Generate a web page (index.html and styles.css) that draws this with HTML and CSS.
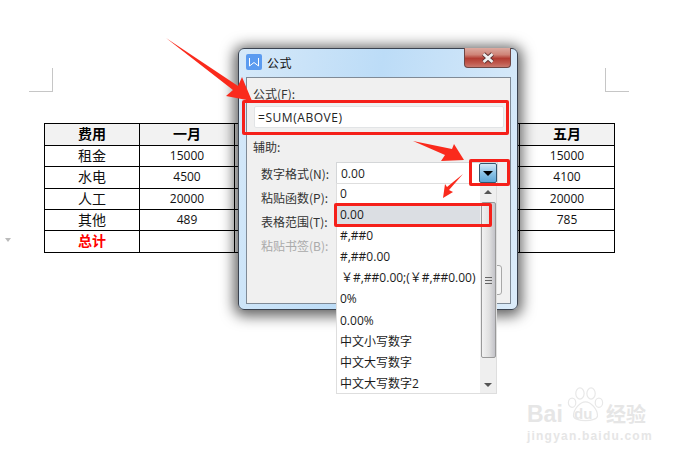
FILE: index.html
```html
<!DOCTYPE html>
<html lang="zh">
<head>
<meta charset="utf-8">
<title>公式</title>
<link rel="stylesheet" href="styles.css">
</head>
<body>
<main class="doc">
  <div class="marks"><span class="mark mark-l"></span><span class="mark mark-r"></span></div>
  <table class="sheet">
    <tr class="head"><th>费用</th><th>一月</th><th></th><th></th><th></th><th>五月</th></tr>
    <tr><td class="cn">租金</td><td>15000</td><td></td><td></td><td></td><td>15000</td></tr>
    <tr><td class="cn">水电</td><td>4500</td><td></td><td></td><td></td><td>4100</td></tr>
    <tr><td class="cn">人工</td><td>20000</td><td></td><td></td><td></td><td>20000</td></tr>
    <tr><td class="cn">其他</td><td>489</td><td></td><td></td><td></td><td>785</td></tr>
    <tr><td class="total">总计</td><td></td><td></td><td></td><td></td><td></td></tr>
  </table>
  <span class="para-mark"></span>

  <section class="dialog">
    <header class="titlebar">
      <span class="logo"><svg viewBox="0 0 16 16" width="16" height="16"><path d="M3.5 4 V12 L8 8.5 L12.5 12 V4" fill="none" stroke="#fff" stroke-width="1"/></svg></span>
      <span class="title">公式</span>
      <span class="close"><svg viewBox="0 0 14 12" width="14" height="12"><path d="M2.5 2 L11.5 10 M11.5 2 L2.5 10" stroke="#5a3030" stroke-width="4.4"/><path d="M2.5 2 L11.5 10 M11.5 2 L2.5 10" stroke="#f0f0f0" stroke-width="2.8"/></svg></span>
    </header>
    <div class="panel">
      <div class="label">公式(F):</div>
      <div class="input">=SUM(ABOVE)</div>
      <div class="label label-help">辅助:</div>
      <div class="field field-first">数字格式(N):</div>
      <div class="field">粘贴函数(P):</div>
      <div class="field">表格范围(T):</div>
      <div class="field field-off">粘贴书签(B):</div>
      <div class="ok"></div>
    </div>
  </section>

  <div class="combo">
    <span class="combo-value">0.00</span>
    <span class="combo-btn"><i></i></span>
  </div>
  <div class="list">
    <ul class="options">
      <li>0</li>
      <li class="on">0.00</li>
      <li>#,##0</li>
      <li>#,##0.00</li>
      <li class="wide">￥#,##0.00;(￥#,##0.00)</li>
      <li>0%</li>
      <li>0.00%</li>
      <li>中文小写数字</li>
      <li>中文大写数字</li>
      <li>中文大写数字2</li>
    </ul>
    <div class="scroll">
      <i class="up"></i>
      <div class="thumb"><b></b></div>
      <i class="down"></i>
    </div>
  </div>

  <span class="box box-a"></span>
  <span class="box box-b"></span>
  <span class="box box-c"></span>

  <svg class="arrows" viewBox="0 0 687 460" width="687" height="460">
    <polygon points="166,38 238,86 242,77 252,101 226,96 233,90" fill="#fa2a1c"/>
    <polygon points="413,141 452,149 454,144 464,160 441,161 445,155" fill="#fa2a1c"/>
    <polygon points="463,174 449,190 453,192 443,198 445,184 447,187" fill="#fa2a1c"/>
  </svg>

  <div class="wm">
    <svg class="paw" viewBox="0 0 40 40" width="37" height="37"><g fill="none" stroke="#e8e8e8" stroke-width="1.3"><ellipse cx="5.5" cy="17" rx="4" ry="5"/><ellipse cx="14" cy="7" rx="4.5" ry="6"/><ellipse cx="26" cy="7" rx="4.5" ry="6"/><ellipse cx="34.5" cy="17" rx="4" ry="5"/><path d="M7 31 C7 24 14 16 20 16 C26 16 33 24 33 31 C33 38 7 38 7 31Z"/></g></svg>
    <div class="wm-main"><span class="wm-bai">Bai</span><span class="wm-du">du</span><span class="wm-cn">经验</span></div>
    <div class="wm-sub">jingyan.baidu.com</div>
  </div>
</main>
</body>
</html>
```
FILE: styles.css
```css
* { box-sizing: border-box; }
html, body { margin: 0; padding: 0; background: #fff; }
body { width: 687px; height: 460px; overflow: hidden; font-family: "Noto Sans", "Noto Sans CJK SC", sans-serif; }
.doc { position: relative; width: 687px; height: 460px; padding: 68px 0 0 29px; }

.marks { display: flex; justify-content: space-between; width: 600px; height: 24px; }
.mark { display: block; width: 24px; height: 24px; border-bottom: 1px solid #c6c6c6; }
.mark-l { border-right: 1px solid #c6c6c6; }
.mark-r { border-left: 1px solid #c6c6c6; }

.sheet { border-collapse: collapse; table-layout: fixed; width: 570px; margin: 31px 0 0 15px; color: #111; }
.sheet th, .sheet td { width: 95px; border: 1px solid #000; padding: 0; text-align: center; height: 21.3px; line-height: 18px; font-size: 12px; font-family: "Open Sans", "Noto Sans CJK SC", sans-serif; }
.sheet .head th { background: #f2f2f2; font: bold 14px/18px "Noto Sans CJK SC", sans-serif; color: #000; padding-bottom: 3px; }
.sheet td.cn { font: 14px/18px "Noto Sans CJK SC", sans-serif; padding-bottom: 2px; }
.sheet td.total { font: bold 14px/18px "Noto Sans CJK SC", sans-serif; color: #f00; padding-bottom: 3px; }
.para-mark { position: absolute; left: 5px; top: 238px; border: 3px solid transparent; border-top: 4px solid #bbb; border-bottom: 0; width: 0; height: 0; }

.dialog { position: absolute; left: 238px; top: 48px; width: 280px; height: 262px; padding: 0 6px 5px 7px; display: flex; flex-direction: column; border: 1px solid #3b4350; border-radius: 6px; background: linear-gradient(100deg, #d6e9f9 0%, #bcdcf7 45%, #dcecfa 100%); box-shadow: 0 2px 14px 4px rgba(0,0,0,.62); font-size: 12px; color: #222; }
.titlebar { position: relative; display: flex; align-items: center; gap: 5px; height: 28px; flex: none; padding-bottom: 2px; }
.logo { width: 16px; height: 16px; background: #5b9bf0; border-radius: 2px; display: flex; }
.title { font: 12px "Noto Sans CJK SC", sans-serif; color: #111; letter-spacing: .4px; }
.close { position: absolute; right: 0; top: -1px; width: 47px; height: 20px; display: flex; align-items: center; justify-content: center; border: 1px solid #6e4644; border-top: 0; border-radius: 0 0 4px 4px; background: linear-gradient(#dcaaa0, #cf8478 35%, #b23c32 55%, #c0594e 80%, #c9786e); }
.panel { position: relative; flex: 1; border: 1px solid #7f8a96; background: #f0f0f0; padding: 8px 7px 0; font-family: "Noto Sans CJK SC", sans-serif; }
.label { height: 18px; line-height: 16px; color: #333; margin-left: -1px; }
.input { width: 250px; height: 22px; margin-top: 2px; padding-left: 3px; line-height: 21px; background: #fff; border: 1px solid #e2e4e6; border-radius: 2px; font-family: "Open Sans", sans-serif; font-size: 12px; letter-spacing: .55px; color: #222; }
.label-help { margin-top: 11px; }
.field { width: 82px; height: 24px; line-height: 22px; padding-left: 7px; color: #333; white-space: nowrap; }
.field-first { margin-top: 6px; }
.field-off { color: #aaa; }
.ok { position: absolute; right: 8px; top: 187px; width: 18px; height: 30px; border: 1px solid #a8a8a8; border-radius: 3px; background: #f5f5f5; }

.combo { position: absolute; left: 336px; top: 162px; width: 162px; height: 22px; display: flex; align-items: center; justify-content: space-between; background: #fff; border: 1px solid #d4d6d8; padding: 0 0 0 4px; font-family: "Open Sans", sans-serif; font-size: 12px; color: #222; }
.combo-btn { width: 18px; height: 20px; display: flex; align-items: center; justify-content: center; background: linear-gradient(#d4e9f7, #8cc4e6 50%, #5fa7d6); border: 1px solid #33566e; border-radius: 2px; }
.combo-btn i { width: 0; height: 0; border: 5px solid transparent; border-top: 5px solid #000; border-bottom: 0; }

.list { position: absolute; left: 336px; top: 183px; width: 161px; height: 211px; display: flex; background: #fff; border: 1px solid #dedede; font-size: 12px; color: #1c1c1c; font-family: "Open Sans", "Noto Sans CJK SC", sans-serif; }
.options { list-style: none; margin: 0; padding: 0; width: 143px; flex: none; }
.options li { height: 21.1px; line-height: 19px; padding-left: 3px; white-space: nowrap; }
.options li.on { background: #dbdee3; }
.options li.wide { letter-spacing: 0; padding-left: 4px; }
.scroll { flex: 1; display: flex; flex-direction: column; align-items: center; background: #efefef; padding: 6px 0 6px; }
.up { width: 0; height: 0; border: 4px solid transparent; border-bottom: 4px solid #555; border-top: 0; }
.down { width: 0; height: 0; margin-top: auto; border: 4px solid transparent; border-top: 4px solid #555; border-bottom: 0; }
.thumb { width: 15px; height: 156px; margin-top: 8px; border: 1px solid #999; border-radius: 2px; background: linear-gradient(90deg, #f2f2f2, #e0e0e0 55%, #c2c2c8); display: flex; align-items: center; justify-content: center; }
.thumb b { width: 7px; height: 7px; border-top: 1px solid #666; border-bottom: 1px solid #666; background: linear-gradient(#666, #666) center / 100% 1px no-repeat; }

.box { position: absolute; border: 3px solid #f5201a; border-radius: 2px; }
.box-a { left: 242px; top: 100px; width: 267px; height: 35px; }
.box-b { left: 469px; top: 159px; width: 41px; height: 27px; }
.box-c { left: 334px; top: 203px; width: 158px; height: 24px; }
.arrows { position: absolute; left: 0; top: 0; pointer-events: none; }

.wm { position: absolute; left: 527px; top: 387px; width: 125px; color: #e6e6e6; }
.paw { position: absolute; left: 40px; top: 0; }
.wm-main { display: flex; align-items: center; height: 26px; margin-top: 14px; white-space: nowrap; }
.wm-bai { width: 47px; font: bold 23px/26px "Liberation Sans", sans-serif; }
.wm-du { width: 32px; font: bold 15px/26px "Liberation Sans", sans-serif; }
.wm-cn { font: bold 20px/26px "Noto Sans CJK SC", sans-serif; }
.wm-sub { font: bold 12px/14px "Liberation Sans", sans-serif; letter-spacing: 1.2px; margin-top: 2px; }
```
